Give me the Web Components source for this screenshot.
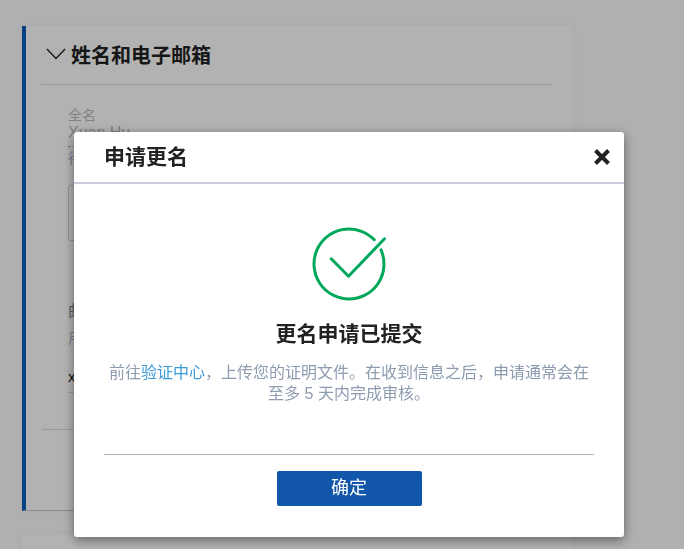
<!DOCTYPE html>
<html lang="zh">
<head>
<meta charset="utf-8">
<title>申请更名</title>
<style>
  html, body { margin: 0; height: 100%; overflow: hidden; }
  body {
    background: #fcfcfc;
    font-family: "Liberation Sans", "Noto Sans CJK SC", sans-serif;
    color: #222;
  }
</style>
</head>
<body>
<name-card heading="姓名和电子邮箱">
  <info-field label="全名" value="Xuan Hu" note="待审核"></info-field>
  <info-box></info-box>
  <email-field title="邮箱地址" hint="用于登录" value="xuan.hu"></email-field>
</name-card>
<blank-card></blank-card>
<modal-overlay></modal-overlay>
<rename-dialog heading="申请更名" title-text="更名申请已提交" button="确定">
  前往<a>验证中心</a>，上传您的证明文件。在收到信息之后，申请通常会在至多 5 天内完成审核。
</rename-dialog>

<script>
class nameCard extends HTMLElement {
  constructor() {
    super();
    this.shadowDOM = this.attachShadow({ mode: "open" });
  }
  connectedCallback() {
    this.shadowDOM.innerHTML = `
      <style>
        :host {
          display: block;
          box-sizing: border-box;
          width: 550px;
          height: 485px;
          margin: 26px 0 0 22px;
          padding: 0 20px 0 15px;
          background: #fff;
          border-left: 4px solid #0a5cb8;
          border-bottom: 1px solid #c8ccd8;
          box-shadow: 0 0 10px rgba(0, 0, 0, 0.04);
        }
        .head {
          display: flex;
          align-items: center;
          gap: 5px;
          box-sizing: border-box;
          height: 59px;
          padding-bottom: 2px;
          border-bottom: 1px solid #dcdcdc;
          font-size: 20px;
          font-weight: 700;
          color: #222;
          font-family: "Noto Sans CJK SC", sans-serif;
        }
        .head svg { margin-left: 5px; flex: none; }
        .rows { padding: 21px 0 0 27px; }
        .end { border-bottom: 1px solid #dcdcdc; margin: 36px 0 0 1px; }
      </style>
      <div class="head">
        <svg width="20" height="12" viewBox="0 0 20 12"><path d="M1 1l9 9.5L19 1" fill="none" stroke="#222" stroke-width="1.4"/></svg>
        <span>${this.getAttribute("heading")}</span>
      </div>
      <div class="rows"><slot></slot></div>
      <div class="end"></div>
    `;
  }
}

class infoField extends HTMLElement {
  constructor() {
    super();
    this.shadowDOM = this.attachShadow({ mode: "open" });
  }
  connectedCallback() {
    this.shadowDOM.innerHTML = `
      <style>
        :host { display: block; }
        .label { font-size: 14px; line-height: 18px; color: #bcbcbc; }
        .value { font-size: 16px; line-height: 17px; color: #b8b8b8; border-bottom: 1px dashed #aaa; padding-bottom: 5px; }
        .note { font-size: 14px; line-height: 20px; margin-top: 1px; color: #a3b2c8; }
      </style>
      <div class="label">${this.getAttribute("label")}</div>
      <div class="value">${this.getAttribute("value")}</div>
      <div class="note">${this.getAttribute("note")}</div>
    `;
  }
}

class infoBox extends HTMLElement {
  constructor() {
    super();
    this.attachShadow({ mode: "open" }).innerHTML = `
      <style>
        :host {
          display: block;
          box-sizing: border-box;
          height: 56px;
          margin-top: 17px;
          border: 1px solid #d0d0d0;
          border-radius: 3px;
        }
      </style>
    `;
  }
}

class emailField extends HTMLElement {
  constructor() {
    super();
    this.shadowDOM = this.attachShadow({ mode: "open" });
  }
  connectedCallback() {
    this.shadowDOM.innerHTML = `
      <style>
        :host { display: block; margin-top: 60px; }
        .title { font-size: 17px; line-height: 24px; color: #8a8a8a; }
        .hint { font-size: 14px; line-height: 20px; margin-top: 3px; color: #aab4c6; }
        .value { font-size: 15px; line-height: 20px; margin-top: 19px; padding-bottom: 5px; color: #111; border-bottom: 1px solid #dcdcdc; }
      </style>
      <div class="title">${this.getAttribute("title")}</div>
      <div class="hint">${this.getAttribute("hint")}</div>
      <div class="value">${this.getAttribute("value")}</div>
    `;
  }
}

class blankCard extends HTMLElement {
  constructor() {
    super();
    this.attachShadow({ mode: "open" }).innerHTML = `
      <style>
        :host {
          display: block;
          width: 550px;
          height: 14px;
          margin: 24px 0 0 22px;
          background: #fff;
          box-shadow: 0 0 10px rgba(0, 0, 0, 0.04);
        }
      </style>
    `;
  }
}

class modalOverlay extends HTMLElement {
  constructor() {
    super();
    this.attachShadow({ mode: "open" }).innerHTML = `
      <style>
        :host { display: block; position: fixed; inset: 0; background: rgba(0, 0, 0, 0.3); }
      </style>
    `;
  }
}

class renameDialog extends HTMLElement {
  constructor() {
    super();
    this.shadowDOM = this.attachShadow({ mode: "open" });
  }
  connectedCallback() {
    this.shadowDOM.innerHTML = `
      <style>
        :host {
          display: flex;
          flex-direction: column;
          position: fixed;
          left: 74px;
          top: 132px;
          width: 550px;
          height: 405px;
          background: #fff;
          border-radius: 3px;
          box-shadow: 0 3px 12px rgba(0, 0, 0, 0.45);
        }
        header {
          display: flex;
          align-items: center;
          justify-content: space-between;
          box-sizing: border-box;
          height: 52px;
          padding: 0 12px 0 30px;
          border-bottom: 2px solid #c8ccdb;
          font-family: "Noto Sans CJK SC", sans-serif;
          font-size: 21px;
          font-weight: 700;
          color: #222;
        }
        header span { margin-bottom: 4px; }
        .body {
          flex: 1;
          display: flex;
          flex-direction: column;
          align-items: center;
          padding: 39.5px 30px 0;
          text-align: center;
        }
        h2 {
          margin: 13.5px 0 0;
          font-family: "Noto Sans CJK SC", sans-serif;
          font-size: 21px;
          line-height: 30px;
          font-weight: 700;
          color: #222;
        }
        p {
          margin: 14.5px 0 0;
          font-size: 16px;
          line-height: 21px;
          color: #8e9cb0;
        }
        ::slotted(a) { color: #3d9ad9; }
        footer {
          margin: 0 30px;
          height: 83px;
          box-sizing: border-box;
          padding-top: 16px;
          border-top: 1px solid #b4b4b8;
          display: flex;
          justify-content: center;
        }
        button {
          width: 145px;
          height: 35px;
          padding: 0 0 5px;
          border: 0;
          border-radius: 2px;
          background: #1156a8;
          color: #fff;
          font: 18px "Liberation Sans", "Noto Sans CJK SC", sans-serif;
        }
      </style>
      <header>
        <span>${this.getAttribute("heading")}</span>
        <svg width="20" height="20" viewBox="0 0 20 20"><path d="M3.5 3.5l13 13M16.5 3.5l-13 13" fill="none" stroke="#222" stroke-width="4"/></svg>
      </header>
      <div class="body">
        <svg width="80" height="80" viewBox="0 0 80 80" style="flex:none">
          <path d="M65.26 15.77A35 35 0 1 0 72 25.83" fill="none" stroke="#00a85a" stroke-width="3" stroke-linecap="round"/>
          <path d="M22.2 34.8L39.5 52.2L75.5 14.8" fill="none" stroke="#00a85a" stroke-width="3" stroke-linecap="round" stroke-linejoin="round"/>
        </svg>
        <h2>${this.getAttribute("title-text")}</h2>
        <p><slot></slot></p>
      </div>
      <footer><button>${this.getAttribute("button")}</button></footer>
    `;
  }
}

customElements.define("name-card", nameCard);
customElements.define("info-field", infoField);
customElements.define("info-box", infoBox);
customElements.define("email-field", emailField);
customElements.define("blank-card", blankCard);
customElements.define("modal-overlay", modalOverlay);
customElements.define("rename-dialog", renameDialog);
</script>
</body>
</html>
